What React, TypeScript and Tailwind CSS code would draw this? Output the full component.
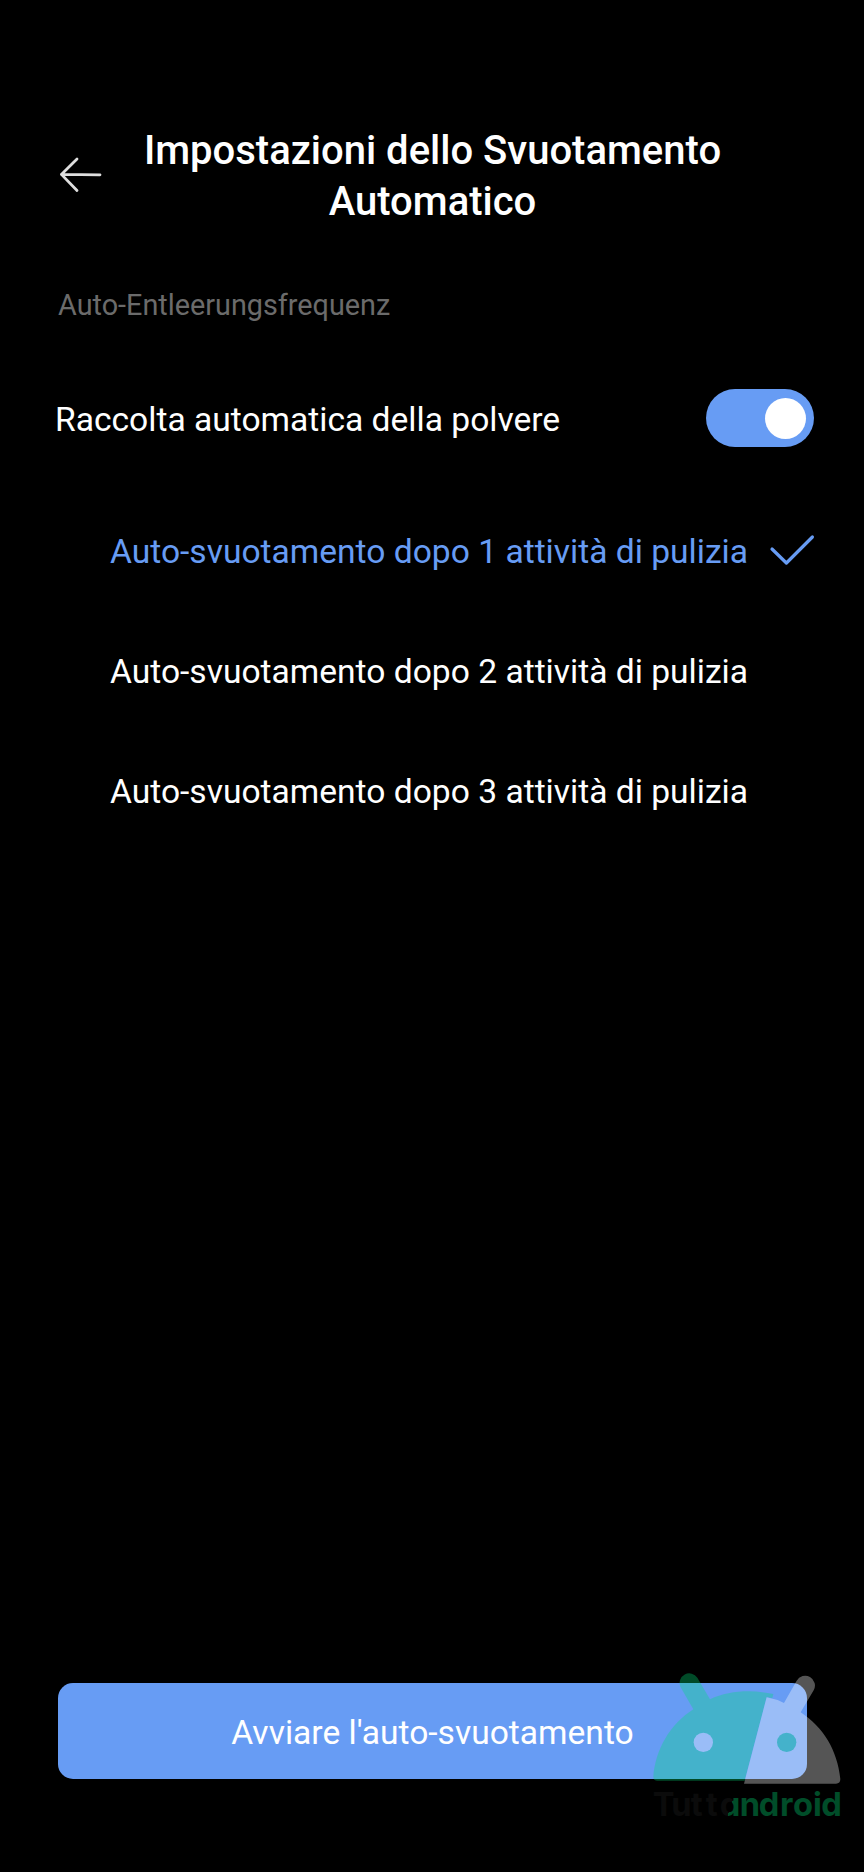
import React from 'react';

const options = [
  'Auto-svuotamento dopo 1 attività di pulizia',
  'Auto-svuotamento dopo 2 attività di pulizia',
  'Auto-svuotamento dopo 3 attività di pulizia',
];

function Watermark() {
  return (
    <svg className="absolute bottom-[42px] right-[14px] opacity-[0.333] pointer-events-none" width="210" height="170" viewBox="0 0 630 510">
      <defs>
        <linearGradient id="brand" gradientUnits="userSpaceOnUse" x1="259" y1="439" x2="283" y2="447">
          <stop offset="0.5" stopColor="#212121" />
          <stop offset="0.5" stopColor="#00e67c" />
        </linearGradient>
      </defs>
      <path fill="#00e07a" d="M40 350 C46 270 90 192 160 148 L121 80 A29 29 0 0 1 172 53 L210 118 C265 92 335 88 400 102 L397 114 L380 112 L314 362 H52 Q40 362 40 350 Z" />
      <path fill="#fff" d="M380 112 Q408 117 432 129 L470 62 A29 29 0 0 1 521 91 L482 157 C550 202 592 270 601 357 Q601 371 588 371 H312 Z" />
      <circle cx="190" cy="247" r="29" fill="#fff" />
      <circle cx="440" cy="247" r="29" fill="#00e07a" />
      <text x="38 94 152 197 239 299 356 420 459 519 544" y="468" fill="url(#brand)" className="font-[Inter,sans-serif] text-[98px] font-bold [font-feature-settings:'cv11']">Tuttandroid</text>
    </svg>
  );
}

export default function App() {
  return (
    <div className="relative flex h-[1872px] w-[864px] flex-col overflow-hidden bg-black font-[Roboto,sans-serif] text-white">
      <header className="mt-[125px] flex h-[100px] items-center pl-[59px]">
        <svg width="44" height="36" viewBox="0 0 44 36" fill="none" stroke="#dedede" strokeWidth="2.8" strokeLinecap="round" strokeLinejoin="round">
          <path d="M18 2 L2.4 17.4 L18 33.5 M2.4 17.4 L41 17.8" />
        </svg>
        <h1 className="ml-[29px] mt-[3px] w-[601px] text-center text-[40px] font-medium leading-[50.4px]">Impostazioni dello Svuotamento Automatico</h1>
      </header>

      <p className="mt-[60px] pl-[58px] text-[28.8px] leading-10 text-[#6b6b6b]">Auto-Entleerungsfrequenz</p>

      <div className="mt-[63px] flex h-[60px] items-center justify-between pl-[55px] pr-[50px]">
        <span className="mt-1 text-[33.6px] leading-10">Raccolta automatica della polvere</span>
        <button className="flex h-[58px] w-[108px] items-center justify-end rounded-full bg-[#679cf4] pr-2">
          <span className="size-[41px] rounded-full bg-white" />
        </button>
      </div>

      <ul className="mt-[43px]">
        {options.map((label, i) => (
          <li key={label} className={i === 0 ? 'flex h-[120px] items-center pl-[110px] text-[#679cf4]' : 'flex h-[120px] items-center pl-[110px]'}>
            <span className="mt-0.5 w-[638px] whitespace-nowrap text-[33.6px] leading-10">{label}</span>
            {i === 0 && (
              <svg className="mb-0.5 ml-[21px]" width="46" height="32" viewBox="0 0 46 32" fill="none" stroke="currentColor" strokeWidth="3.2" strokeLinecap="round" strokeLinejoin="round">
                <path d="M3 15 L17.4 29 L43.4 3" />
              </svg>
            )}
          </li>
        ))}
      </ul>

      <button className="mb-[93px] ml-[58px] mt-auto h-24 w-[749px] rounded-[15px] bg-[#679cf4] pt-1 text-[33.6px] leading-10">Avviare l'auto-svuotamento</button>

      <Watermark />
    </div>
  );
}
